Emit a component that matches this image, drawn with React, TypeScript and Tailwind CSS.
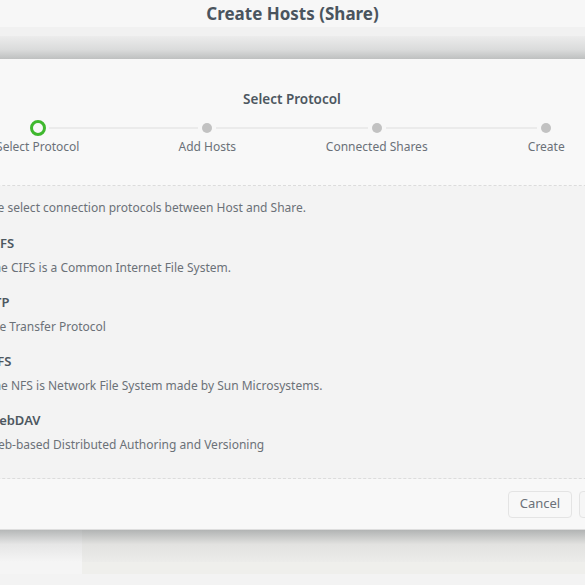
import React from 'react'

const steps = ['Select Protocol', 'Add Hosts', 'Connected Shares', 'Create']

const protocols = [
  { name: 'CIFS', desc: 'The CIFS is a Common Internet File System.' },
  { name: 'FTP', desc: 'File Transfer Protocol' },
  { name: 'NFS', desc: 'The NFS is Network File System made by Sun Microsystems.' },
  { name: 'WebDAV', desc: 'Web-based Distributed Authoring and Versioning' },
]

export default function App() {
  return (
    <div
      className="w-[585px] h-[585px] overflow-hidden bg-[#f3f3f3] text-[#6b7178]"
      style={{ fontFamily: '"Noto Sans", "Open Sans", sans-serif' }}
    >
      {/* top bar */}
      <div className="h-[27px] bg-[#f7f7f7] flex items-center justify-center">
        <h1 className="text-[17px] font-bold text-[#4a545e] leading-none -mt-[1px]">Create Hosts (Share)</h1>
      </div>
      <div className="h-[9px] bg-[#f1f1f1]" />
      <div className="h-[23px] bg-gradient-to-b from-[#ececec] via-[#dadbdb] via-60% to-[#bec0c0]" />

      {/* dialog */}
      <div className="w-[760px] ml-[-88px] bg-[#f8f8f8] border-b border-[#dedede]">
        <div className="pt-[31px] pb-[30px] border-b border-dashed border-[#dcdcdc]">
          <h2 className="text-center text-[13.5px] font-semibold leading-[18px] text-[#4d5760]">Select Protocol</h2>
          <div className="grid grid-cols-4 px-[41px] mt-[12px]">
            {steps.map((s, i) => (
              <div key={s} className="flex flex-col items-center">
                <div className="flex items-center w-full h-[16px]">
                  <div className={`flex-1 h-[2px] ${i === 0 ? '' : 'bg-[#ebebeb]'}`} />
                  {i === 0 ? (
                    <div className="w-[16px] h-[16px] mx-[3px] rounded-full border-[3px] border-[#3fb82e]" />
                  ) : (
                    <div className="w-[10px] h-[10px] mx-[4px] rounded-full bg-[#c2c2c2]" />
                  )}
                  <div className={`flex-1 h-[2px] ${i === steps.length - 1 ? '' : 'bg-[#ebebeb]'}`} />
                </div>
                <span className="mt-[3px] text-[12px] leading-[16px] text-[#6b7178]">{s}</span>
              </div>
            ))}
          </div>
        </div>

        <div className="bg-[#f3f3f3] pt-[13px] pb-[24px] pl-[56px] border-b border-dashed border-[#dcdcdc]">
          <p className="text-[12px] leading-[18px]">Please select connection protocols between Host and Share.</p>
          <div className="mt-[17px] pl-[19px] flex flex-col gap-[16px]">
            {protocols.map((p) => (
              <div key={p.name} className="flex flex-col gap-[7px]">
                <span className="text-[13px] font-semibold leading-[18px] text-[#4d5760]">{p.name}</span>
                <span className="text-[12px] leading-[18px]">{p.desc}</span>
              </div>
            ))}
          </div>
        </div>

        <div className="h-[50px] flex items-center justify-end gap-[7px] pr-[29px]">
          <button className="h-[27px] w-[64px] rounded-[4px] border border-[#e4e4e4] bg-[#f8f8f8] text-[13px] text-[#6b7178]">
            Cancel
          </button>
          <button className="h-[27px] w-[64px] rounded-[4px] border border-[#e4e4e4] bg-[#f6f6f6] text-[13px] text-[#6b7178]">
            Next
          </button>
        </div>
      </div>

      {/* shadow below */}
      <div className="flex h-[32px]">
        <div className="w-[82px] bg-gradient-to-b from-[#b6b8b8] via-[#e6e6e6] via-45% to-[#f5f5f5]" />
        <div className="flex-1 bg-gradient-to-b from-[#b2b4b4] via-[#e2e2e0] via-45% to-[#ececea]" />
      </div>
      <div className="flex h-[12px]">
        <div className="w-[82px] bg-[#f5f5f5]" />
        <div className="flex-1 bg-[#efefec]" />
      </div>
    </div>
  )
}
